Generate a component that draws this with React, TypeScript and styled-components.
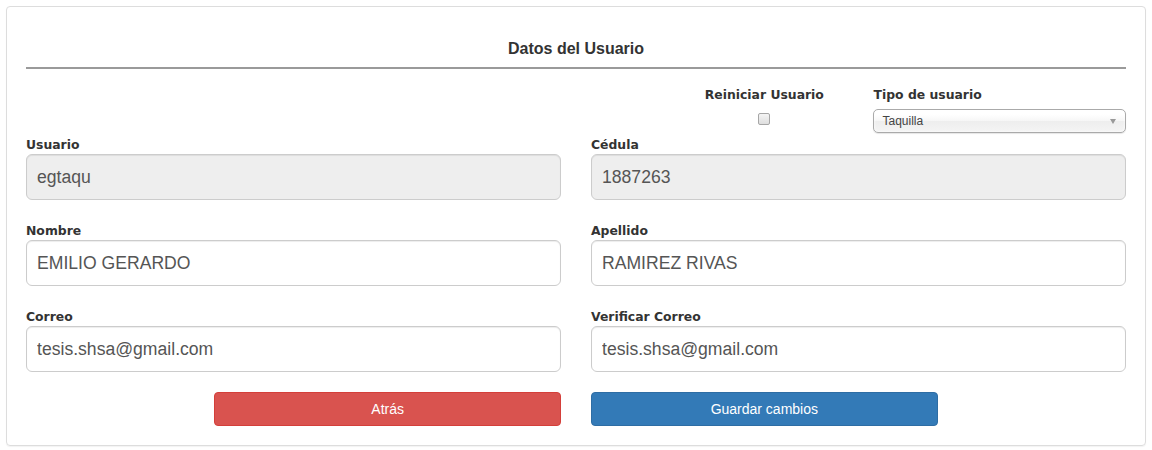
import styled, { createGlobalStyle } from "styled-components";

const GlobalStyle = createGlobalStyle`
  body {
    margin: 0;
    background: #fff;
    font-family: "Liberation Sans", Arial, sans-serif;
    color: #333;
  }
`;

const App = () => {
  return (
    <Page>
      <GlobalStyle />
      <Panel>
        <Title>Datos del Usuario</Title>

        <Grid>
          <Field $start={8} $span={2} $center>
            <Label $gap={5}>Reiniciar Usuario</Label>
            <Checkbox type="checkbox" />
          </Field>
          <Field $start={10} $span={3}>
            <Label $gap={5}>Tipo de usuario</Label>
            <Select>
              <span>Taquilla</span>
              <Arrow />
            </Select>
          </Field>
        </Grid>

        <Grid $rowGap={20} $top={1}>
          <Field $span={6}>
            <Label>Usuario</Label>
            <Input readOnly defaultValue="egtaqu" $disabled />
          </Field>
          <Field $span={6}>
            <Label>Cédula</Label>
            <Input readOnly defaultValue="1887263" $disabled />
          </Field>
          <Field $span={6}>
            <Label>Nombre</Label>
            <Input defaultValue="EMILIO GERARDO" />
          </Field>
          <Field $span={6}>
            <Label>Apellido</Label>
            <Input defaultValue="RAMIREZ RIVAS" />
          </Field>
          <Field $span={6}>
            <Label>Correo</Label>
            <Input defaultValue="tesis.shsa@gmail.com" />
          </Field>
          <Field $span={6}>
            <Label>Verificar Correo</Label>
            <Input defaultValue="tesis.shsa@gmail.com" />
          </Field>
        </Grid>

        <Grid $top={20}>
          <Field $start={3} $span={4}>
            <Button $variant="danger">Atrás</Button>
          </Field>
          <Field $span={4}>
            <Button $variant="primary">Guardar cambios</Button>
          </Field>
        </Grid>
      </Panel>
    </Page>
  );
};

const Page = styled.div`
  padding: 6px;
`;

const Panel = styled.div`
  border: 1px solid #dddddd;
  border-radius: 4px;
  box-shadow: 0 1px 1px rgba(0, 0, 0, 0.05);
  padding: 32px 19px 19px;
`;

const Title = styled.h4`
  margin: 0 0 15px;
  padding-bottom: 8px;
  border-bottom: 2px solid #9a9a9a;
  text-align: center;
  font-size: 16px;
  font-weight: bold;
  line-height: 20px;
  color: #333;
`;

const Grid = styled.div<{ $rowGap?: number; $top?: number }>`
  display: grid;
  grid-template-columns: repeat(12, 1fr);
  column-gap: 30px;
  row-gap: ${(p) => p.$rowGap ?? 0}px;
  margin-top: ${(p) => p.$top ?? 0}px;
`;

const Field = styled.div<{ $start?: number; $span: number; $center?: boolean }>`
  grid-column: ${(p) => (p.$start ? `${p.$start} / span ${p.$span}` : `span ${p.$span}`)};
  display: flex;
  flex-direction: column;
  align-items: ${(p) => (p.$center ? "center" : "stretch")};
`;

const Label = styled.label<{ $gap?: number }>`
  display: block;
  font-family: "DejaVu Sans", Verdana, sans-serif;
  font-weight: bold;
  font-size: 12.4px;
  line-height: 21px;
  margin-bottom: ${(p) => (p.$gap ?? 0) - 1}px;
  color: #333;
  white-space: nowrap;
`;

const Checkbox = styled.input`
  appearance: none;
  box-sizing: border-box;
  margin: 4px 0 0;
  width: 12px;
  height: 12px;
  border: 1px solid #a6a6a6;
  border-radius: 2px;
  background: linear-gradient(#f4f4f4, #dedede);
`;

const Select = styled.div`
  position: relative;
  height: 24px;
  box-sizing: border-box;
  padding: 0 0 0 8px;
  border: 1px solid #aaa;
  border-radius: 5px;
  background: linear-gradient(#fff 20%, #f6f6f6 50%, #eee 52%, #f4f4f4 100%);
  box-shadow: 0 0 3px #fff inset, 0 1px 1px rgba(0, 0, 0, 0.1);
  font-size: 12px;
  line-height: 22px;
  color: #444;
`;

const Arrow = styled.span`
  position: absolute;
  right: 9px;
  top: 9px;
  width: 0;
  height: 0;
  border-left: 3.5px solid transparent;
  border-right: 3.5px solid transparent;
  border-top: 5px solid #999;
`;

const Input = styled.input<{ $disabled?: boolean }>`
  box-sizing: border-box;
  width: 100%;
  height: 46px;
  padding: 10px 10px;
  border: 1px solid #ccc;
  border-radius: 6px;
  box-shadow: inset 0 1px 1px rgba(0, 0, 0, 0.075);
  background: ${(p) => (p.$disabled ? "#eeeeee" : "#fff")};
  font-family: "Liberation Sans", Arial, sans-serif;
  font-size: 17.6px;
  color: #555;
  outline: none;
`;

const Button = styled.button<{ $variant: "danger" | "primary" }>`
  height: 34px;
  width: 100%;
  border-radius: 4px;
  border: 1px solid ${(p) => (p.$variant === "danger" ? "#d43f3a" : "#2e6da4")};
  background: ${(p) => (p.$variant === "danger" ? "#d9534f" : "#337ab7")};
  color: #fff;
  font-family: "Liberation Sans", Arial, sans-serif;
  font-size: 14px;
  cursor: pointer;
`;

export default App;
